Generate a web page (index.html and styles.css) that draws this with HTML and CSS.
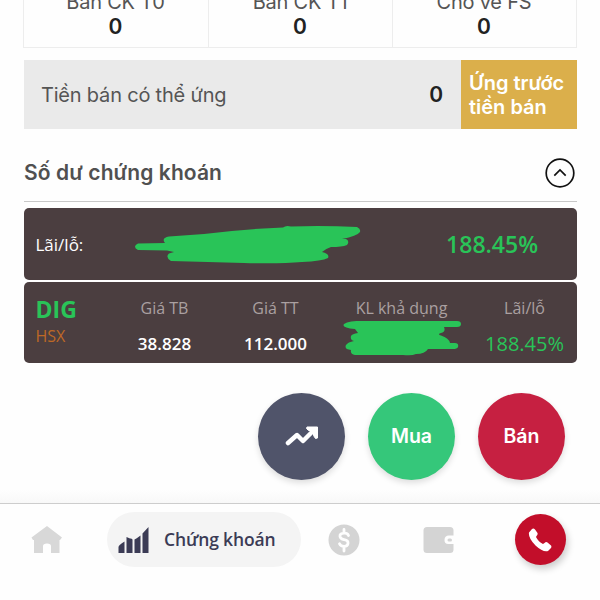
FILE: index.html
```html
<!DOCTYPE html>
<html lang="vi">
<head>
<meta charset="utf-8">
<title>Chứng khoán</title>
<link rel="stylesheet" href="styles.css">
</head>
<body>
<div class="screen">
  <main class="content">
    <section class="stats">
      <div class="stat"><span class="stat-label">Bán CK T0</span><b class="stat-value">0</b></div>
      <div class="stat"><span class="stat-label">Bán CK T1</span><b class="stat-value">0</b></div>
      <div class="stat"><span class="stat-label">Chờ về FS</span><b class="stat-value">0</b></div>
    </section>
    <section class="advance">
      <span class="advance-label">Tiền bán có thể ứng</span>
      <b class="advance-value">0</b>
      <button class="advance-button">Ứng trước<br>tiền bán</button>
    </section>
    <header class="section-head">
      <h2 class="section-title">Số dư chứng khoán</h2>
      <svg class="collapse" viewBox="0 0 30 30"><circle cx="15" cy="15" r="13.8"/><path d="M9.3 17.6 15 12l5.700 5.600"/></svg>
    </header>
    <section class="card summary">
      <span class="summary-label">Lãi/lỗ:</span>
      <svg class="scribble-wide" viewBox="0 0 228 40"><path d="M4 19.500 31 19Q27 14 35 12.500L70 10Q110 5 149 3.500Q152 1 157 2.500Q190 1.500 223 3Q227 5 226 8Q223 12 208 15H212Q216 17 213 21Q208 23 197 23Q191 25 188 28Q196 30 194 34Q188 37 168 38Q146 40 110 39L37 37Q31 33 35 29.500L40 28 33 26.500 4 26Q-2 22.500 4 19.500Z"/></svg>
      <b class="summary-value">188.45%</b>
    </section>
    <section class="card holding">
      <div class="symbol"><b class="ticker">DIG</b><span class="exchange">HSX</span></div>
      <div class="metric"><span class="metric-label">Giá TB</span><b class="metric-value">38.828</b></div>
      <div class="metric"><span class="metric-label">Giá TT</span><b class="metric-value">112.000</b></div>
      <div class="metric"><span class="metric-label">KL khả dụng</span>
        <svg class="scribble-small" viewBox="0 0 120 36"><path d="M5 2.500Q10 .5 17 1H115Q119 1 119 4Q119 7 115 7H102Q104 12 99 13Q95 14 99 15.500Q107 18 108 23H113Q117 23 116 27Q115 29 111 29H86Q83 34 74 34Q70 36 61 35H13Q8 34 9 30Q2 29 4 25Q6 22 12 21Q8 20 9 16Q10 14 16 13L13 9Q-1 8 2 4Z"/></svg>
      </div>
      <div class="metric"><span class="metric-label">Lãi/lỗ</span><span class="metric-value gain">188.45%</span></div>
    </section>
    <div class="actions">
      <button class="action chart"><svg class="trend" viewBox="0 0 34 22"><path class="trend-line" d="M3 18 12 10l6 6L28 6"/><path class="trend-head" d="M22 2h10.500v11l-2 .5-2-3V5.500h-5l-2-2Z"/></svg></button>
      <button class="action buy">Mua</button>
      <button class="action sell">Bán</button>
    </div>
  </main>
  <nav class="tabs">
    <svg class="tab-home" viewBox="0 0 32 30"><path d="M16 1 31 12.500 29 15H28.500V28H20V21Q20 18.500 16 18.500T12 21V28H3V15H2L.5 12.500Z"/></svg>
    <div class="tab-active">
      <svg class="bars" viewBox="0 0 32 28"><path d="M.5 27V21Q.5 19 6.500 15.500V27ZM8.500 27V11L12 12.500Q13.500 12 14.500 13.500V27ZM16.500 27V13.500Q18 13 22.500 9.500V27ZM24.500 27V7.500L30.500 1V27Z"/></svg>
      <span class="tab-label">Chứng khoán</span>
    </div>
    <svg class="tab-money" viewBox="0 0 32 32"><circle cx="16" cy="16" r="15.500"/><path class="dollar" d="M20.500 11.500Q19.500 9 16 9.200Q11.500 9.500 12 12.500Q12.500 15 16 15.700Q20.500 16.500 20 19.500Q19.500 22.500 16 22.400Q12.500 22.300 11.500 19.800M16 5.500V9M16 23v4"/></svg>
    <svg class="tab-wallet" viewBox="0 0 31 28"><path d="M4 1H27Q30.500 1 30.500 4.500V9.500H26Q21.500 9.500 21.500 14T26 18H30.500V23.500Q30.500 27 27 27H4Q.5 27 .5 23.500V4.500Q.5 1 4 1Z"/><rect x="24.500" y="12.500" width="4.500" height="3" rx="1.500"/></svg>
    <div class="call"><svg class="phone" viewBox="0 0 24 24"><path d="M1 4.500 4 1Q5.500 0 7 1.500L9.500 5Q10 6.500 8.500 8L8 9Q10.500 14 15 16L16.500 15Q18 13.500 19.500 14.500L23 17.500Q24 19 22.500 20.500L20 23Q15 24.500 7.500 17.500Q0 10 1 4.500Z"/></svg></div>
  </nav>
</div>
</body>
</html>
```
FILE: styles.css
```css
* { box-sizing: border-box; }
body { margin: 0; background: #fefefe; font-family: Inter, "Noto Sans", sans-serif; }
button { border: 0; padding: 0; font: inherit; }
svg { display: block; flex: none; }

.screen { display: flex; flex-direction: column; width: 600px; height: 600px; overflow: hidden; }
.content { height: 503px; padding: 0 23px 0 24px; background: linear-gradient(#fefefe 490px, #f8f8f8 503px); }

.stats { display: grid; grid-template-columns: repeat(3, 1fr); grid-template-rows: 47px; height: 48px; margin-left: -1px; border: solid #ededed; border-width: 0 1px 1px; }
.stat { display: flex; flex-direction: column; align-items: center; justify-content: flex-end; padding: 0 1px 7px 0; }
.stat + .stat { border-left: 1px solid #ededed; }
.stat-label { color: #555; font-size: 20px; line-height: 24px; letter-spacing: -0.2px; }
.stat-value { color: #222; font-size: 21px; line-height: 26px; font-weight: 600; }

.advance { display: flex; align-items: center; height: 69px; margin-top: 12px; background: #eaeaea; }
.advance-label { flex: 1; padding-left: 17px; color: #555; font-size: 20px; letter-spacing: -0.2px; }
.advance-value { margin-right: 18px; color: #222; font-size: 21px; font-weight: 600; }
.advance-button { width: 116px; height: 69px; padding-left: 8px; background: #dbaf4b; color: #fff; font-size: 20px; font-weight: 600; line-height: 24px; text-align: left; }

.section-head { display: flex; align-items: center; justify-content: space-between; height: 73px; padding: 15px 2px 0 0; border-bottom: 1px solid #c8c8c8; }
.section-title { margin: 0; color: #505050; font-size: 21px; font-weight: 600; letter-spacing: 0.1px; }
.collapse { width: 30px; height: 30px; fill: none; stroke: #111; stroke-width: 1.700; }

.card { margin-left: -0.5px; border-radius: 5px; background: #4b3e40; font-family: "Open Sans", "Noto Sans", sans-serif; }
.summary { display: flex; align-items: center; height: 72px; margin-top: 6.400px; padding: 0 39px 0 12px; }
.summary-label { width: 98px; color: #fff; font-size: 17px; }
.scribble-wide { width: 228px; height: 40px; fill: #29c458; }
.summary-value { flex: 1; color: #29c458; font-size: 23px; font-weight: 600; text-align: right; }

.holding { display: grid; grid-template-columns: 85.500px 111px 111px 141px 105px; height: 81px; margin-top: 2px; }
.symbol { display: flex; flex-direction: column; padding: 11.700px 0 0 12px; }
.ticker { color: #29c458; font-size: 23px; line-height: 30px; }
.exchange { color: #bd6826; font-size: 16px; line-height: 24px; }
.metric { display: flex; flex-direction: column; align-items: center; padding-top: 13.600px; }
.metric-label { color: #aaa0a1; font-size: 16px; line-height: 24px; }
.metric-value { margin-top: 11.600px; color: #fff; font-size: 17px; line-height: 24px; font-weight: 600; }
.gain { color: #29c458; font-size: 20px; font-weight: 400; }
.scribble-small { width: 120px; height: 36px; fill: #29c458; }

.actions { display: flex; justify-content: flex-end; gap: 23px; padding: 29.600px 12px 0 0; }
.action { display: grid; place-items: center; width: 87px; height: 87px; border-radius: 50%; color: #fff; font-size: 19.500px; font-weight: 600; box-shadow: 0 3px 6px #0002; }
.chart { background: #50546a; }
.buy { background: #35c77a; }
.sell { background: #c62041; }
.trend { width: 34px; height: 22px; }
.trend-line { fill: none; stroke: #fff; stroke-width: 4.500; stroke-linecap: round; stroke-linejoin: round; }
.trend-head { fill: #fff; stroke: #fff; stroke-linejoin: round; }

.tabs { display: flex; align-items: center; height: 97px; padding: 0 0 25px 31px; border-top: 1px solid #cdcdcd; background: #fefefe; }
.tab-home { width: 32px; height: 30px; fill: #d8d8d8; }
.tab-active { display: flex; align-items: center; gap: 14px; width: 194px; height: 55px; margin-left: 44px; padding-left: 11px; border-radius: 28px; background: #f4f4f4; }
.bars { width: 32px; height: 28px; fill: #3b3b55; }
.tab-label { padding-bottom: 1px; color: #3b3b55; font-family: "Open Sans", "Noto Sans", sans-serif; font-size: 17.500px; font-weight: 600; letter-spacing: -0.15px; white-space: nowrap; }
.tab-money { width: 32px; height: 32px; margin-left: 26.500px; fill: #d4d4d4; }
.dollar { fill: none; stroke: #fefefe; stroke-width: 2.800; stroke-linecap: round; }
.tab-wallet { width: 31px; height: 28px; margin-left: 63px; fill: #d4d4d4; }
.call { display: grid; place-items: center; width: 51px; height: 51px; margin-left: 61px; border-radius: 50%; background: #c20e2a; box-shadow: 2px 4px 7px #0003; }
.phone { width: 24px; height: 24px; fill: #fff; }
```
